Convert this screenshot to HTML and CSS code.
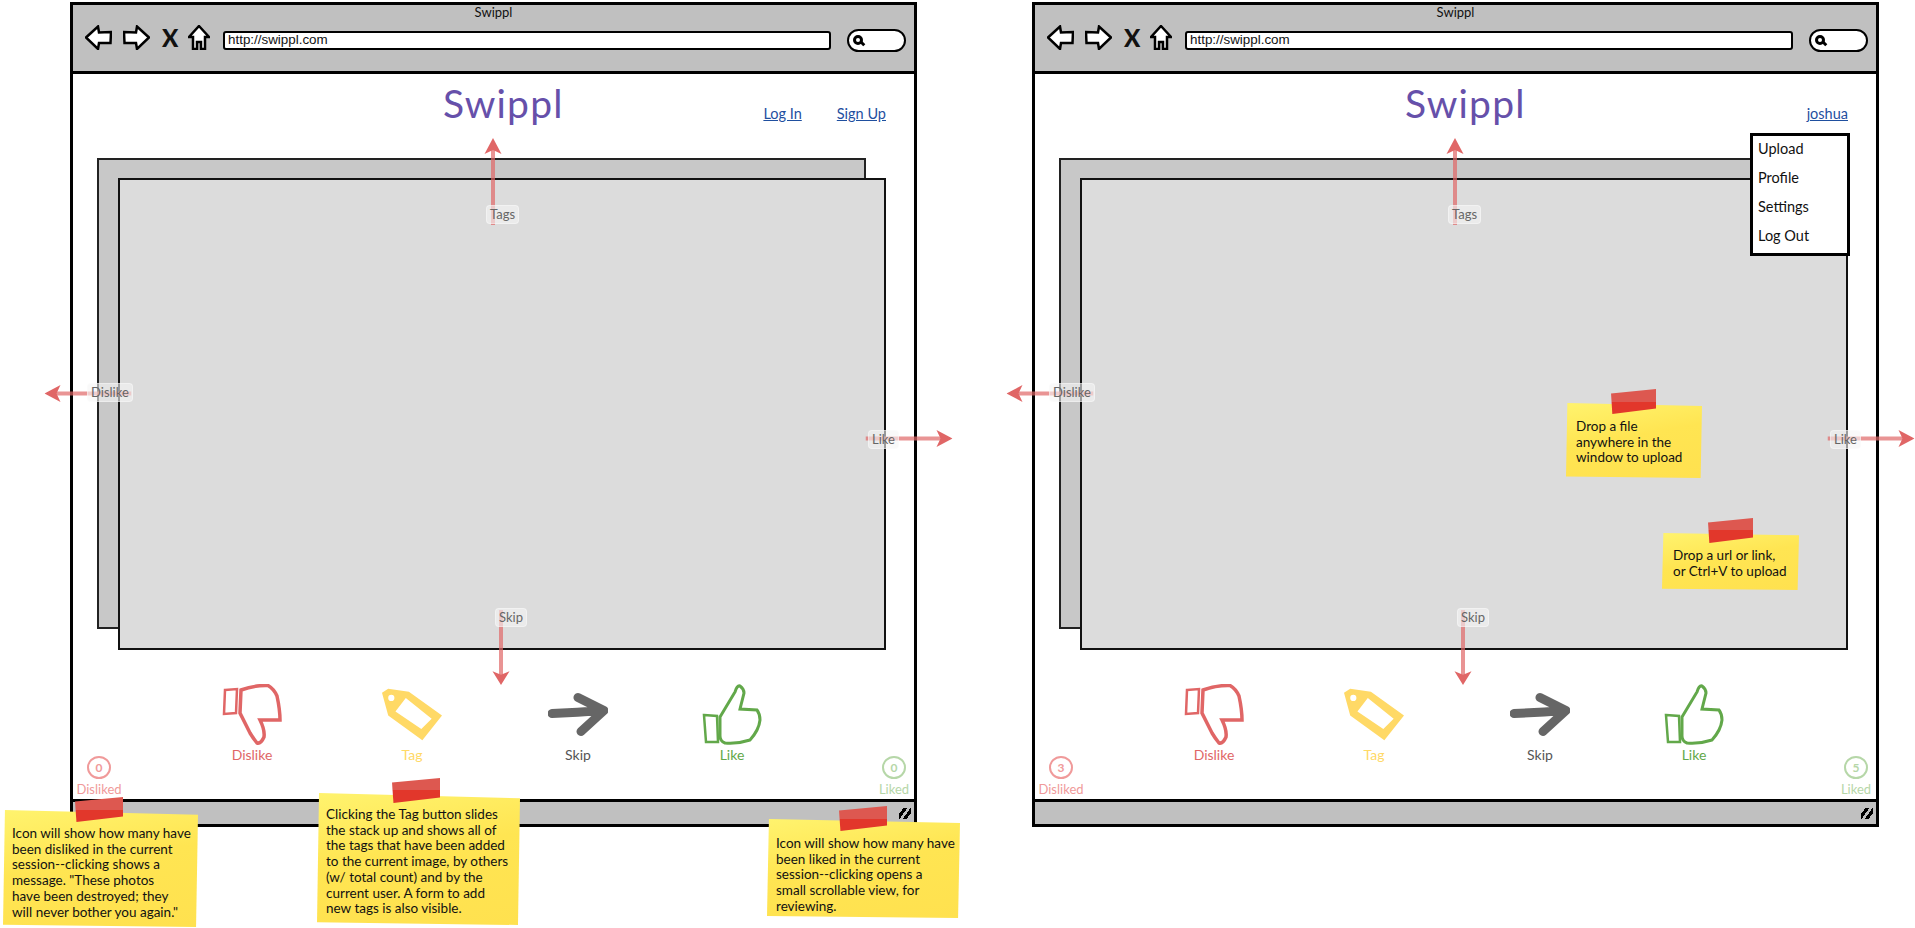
FILE: index.html
```html
<!DOCTYPE html>
<html lang="en">
<head>
  <meta charset="UTF-8" />
  <title>Swippl wireframes</title>
  <link rel="stylesheet" href="styles.css">
</head>
<body>

  <svg class="sprites" width="0" height="0">
    <symbol id="i-back" viewBox="0 0 27 25"><path d="M1 12.5 13 1.5 14 7.5 26 7 25.500 18 14 18 13 24Z"/></symbol>
    <symbol id="i-forward" viewBox="0 0 27 25"><path d="M26 12.500 14 1.500 13 7.500 1 7 1.500 18 13 18 14 24Z"/></symbol>
    <symbol id="i-home" viewBox="0 0 22 25"><path d="M11 1 21 12 17 12 17 24 13 24 13 17 9 17 9 24 5 24 5 12 1 12Z"/></symbol>
    <symbol id="i-dislike" viewBox="0 0 58 61">
      <path d="M2 6 14 5 13 29 1 30Z" stroke-width="2.500"/>
      <path d="M18 6Q32 1 45 1.500 51 5 54 12 57 26 57 36L37 36Q42 46 41 53 38 60 34 59 30 54 27 49L17 29Z" stroke-width="3.500"/>
    </symbol>
    <symbol id="i-tag" viewBox="0 0 58 50">
      <path fill-rule="evenodd" d="M0 4 6 0 26 3 58 26 39 50 6 26ZM9 6A3 3 0 1 0 9 12 3 3 0 1 0 9 6ZM23 9 13 22 38 39 48 29 23 9Z"/>
    </symbol>
    <symbol id="i-skip" viewBox="0 0 60 44"><path d="M4 21Q30 20 54 18M30 5 56 18 33 39"/></symbol>
    <symbol id="i-like" viewBox="0 0 58 61">
      <path d="M1 31 14 32 15 58 3 58Z" stroke-width="2.500"/>
      <path d="M17 33 32 8Q34 1 37 2 41 5 41 9L37 25 54 26Q57 30 57 36 56 46 47 56 35 60 22 59 17 57 17 52Z" stroke-width="3"/>
    </symbol>
    <symbol id="i-arrow" viewBox="0 0 20 87" preserveAspectRatio="none"><path class="shaft" d="M10 10V87"/><path class="head" d="M10 0 18.500 16 10 12 1.500 16Z"/></symbol>
  </svg>

  <main class="board">

    <section class="window">
      <header class="toolbar">
        <div class="toolbar-title">Swippl</div>
        <div class="toolbar-row">
          <svg class="nav nav-arrow"><use href="#i-back"/></svg>
          <svg class="nav nav-arrow"><use href="#i-forward"/></svg>
          <span class="nav-stop">X</span>
          <svg class="nav nav-home"><use href="#i-home"/></svg>
          <div class="url-bar">http://swippl.com</div>
          <div class="search-box"><span class="search-glass"></span></div>
        </div>
      </header>

      <div class="site-header">
        <div class="logo">Swippl</div>
        <nav class="site-links">
          <a href="#">Log In</a>
          <a href="#">Sign Up</a>
        </nav>
      </div>

      <div class="stage">
        <div class="card-back"></div>
        <div class="card-front"></div>
      </div>

      <div class="footer">
        <div class="counter counter-bad"><span class="ring">0</span><span>Disliked</span></div>
        <div class="actions">
          <div class="action action-dislike"><svg class="icon"><use href="#i-dislike"/></svg><span>Dislike</span></div>
          <div class="action action-tag"><svg class="icon"><use href="#i-tag"/></svg><span>Tag</span></div>
          <div class="action action-skip"><svg class="icon"><use href="#i-skip"/></svg><span>Skip</span></div>
          <div class="action action-like"><svg class="icon"><use href="#i-like"/></svg><span>Like</span></div>
        </div>
        <div class="counter counter-good"><span class="ring">0</span><span>Liked</span></div>
      </div>

      <div class="status-bar"><span class="grip"></span></div>

      <div class="swipe swipe-up"><svg class="arrow"><use href="#i-arrow"/></svg><span class="swipe-label">Tags</span></div>
      <div class="swipe swipe-down"><svg class="arrow"><use href="#i-arrow"/></svg><span class="swipe-label">Skip</span></div>
      <div class="swipe swipe-left"><svg class="arrow"><use href="#i-arrow"/></svg><span class="swipe-label">Dislike</span></div>
      <div class="swipe swipe-right"><svg class="arrow"><use href="#i-arrow"/></svg><span class="swipe-label">Like</span></div>

      <div class="note note-disliked">Icon will show how many have<br>been disliked in the current<br>session--clicking shows a<br>message. "These photos<br>have been destroyed; they<br>will never bother you again."</div>
      <div class="note note-tag">Clicking the Tag button slides<br>the stack up and shows all of<br>the tags that have been added<br>to the current image, by others<br>(w/ total count) and by the<br>current user. A form to add<br>new tags is also visible.</div>
      <div class="note note-liked">Icon will show how many have<br>been liked in the current<br>session--clicking opens a<br>small scrollable view, for<br>reviewing.</div>
    </section>

    <section class="window">
      <header class="toolbar">
        <div class="toolbar-title">Swippl</div>
        <div class="toolbar-row">
          <svg class="nav nav-arrow"><use href="#i-back"/></svg>
          <svg class="nav nav-arrow"><use href="#i-forward"/></svg>
          <span class="nav-stop">X</span>
          <svg class="nav nav-home"><use href="#i-home"/></svg>
          <div class="url-bar">http://swippl.com</div>
          <div class="search-box"><span class="search-glass"></span></div>
        </div>
      </header>

      <div class="site-header">
        <div class="logo">Swippl</div>
        <nav class="site-links">
          <a href="#">joshua</a>
        </nav>
      </div>

      <div class="stage">
        <div class="card-back"></div>
        <div class="card-front"></div>
      </div>

      <div class="footer">
        <div class="counter counter-bad"><span class="ring">3</span><span>Disliked</span></div>
        <div class="actions">
          <div class="action action-dislike"><svg class="icon"><use href="#i-dislike"/></svg><span>Dislike</span></div>
          <div class="action action-tag"><svg class="icon"><use href="#i-tag"/></svg><span>Tag</span></div>
          <div class="action action-skip"><svg class="icon"><use href="#i-skip"/></svg><span>Skip</span></div>
          <div class="action action-like"><svg class="icon"><use href="#i-like"/></svg><span>Like</span></div>
        </div>
        <div class="counter counter-good"><span class="ring">5</span><span>Liked</span></div>
      </div>

      <div class="status-bar"><span class="grip"></span></div>

      <div class="swipe swipe-up"><svg class="arrow"><use href="#i-arrow"/></svg><span class="swipe-label">Tags</span></div>
      <div class="swipe swipe-down"><svg class="arrow"><use href="#i-arrow"/></svg><span class="swipe-label">Skip</span></div>
      <div class="swipe swipe-left"><svg class="arrow"><use href="#i-arrow"/></svg><span class="swipe-label">Dislike</span></div>
      <div class="swipe swipe-right"><svg class="arrow"><use href="#i-arrow"/></svg><span class="swipe-label">Like</span></div>

      <ul class="user-menu">
        <li>Upload</li>
        <li>Profile</li>
        <li>Settings</li>
        <li>Log Out</li>
      </ul>

      <div class="note note-file">Drop a file<br>anywhere in the<br>window to upload</div>
      <div class="note note-url">Drop a url or link,<br>or Ctrl+V to upload</div>
    </section>

  </main>

</body>
</html>
```

FILE: styles.css
```css
html, body {
  height: 100%;
}

body {
  margin: 0;
  overflow: hidden;
  background: #fff;
  font-family: Lato, sans-serif;
  color: #111;
}

.sprites {
  position: absolute;
}

.board {
  display: flex;
  gap: 115px;
  padding: 2px 0 0 70px;
}

.window {
  position: relative;
  display: flex;
  flex-direction: column;
  box-sizing: border-box;
  width: 847px;
  height: 825px;
  border: 3px solid #000;
}

/* browser chrome */
.toolbar {
  box-sizing: border-box;
  height: 69px;
  background: #c0c0c0;
  border-bottom: 3px solid #000;
}

.toolbar-title {
  height: 14px;
  font-size: 13px;
  line-height: 14px;
  text-align: center;
}

.toolbar-row {
  display: flex;
  align-items: center;
  height: 26px;
  margin-top: 5px;
  padding: 0 8px 0 12px;
}

.nav {
  fill: #fff;
  stroke: #000;
  stroke-width: 2.500;
  overflow: visible;
}

.nav-arrow {
  width: 27px;
  height: 25px;
  margin-right: 11px;
}

.nav-home {
  width: 22px;
  height: 25px;
  margin-right: 13px;
}

.nav-stop {
  width: 15px;
  margin: 0 11px 0 1px;
  font-size: 24px;
  font-weight: 900;
  line-height: 25px;
  text-align: center;
}

.url-bar {
  flex: 1;
  box-sizing: border-box;
  height: 19px;
  margin-top: 7px;
  padding-left: 3px;
  background: #fff;
  border: 2.500px solid #000;
  border-radius: 3px;
  font-family: "Liberation Sans", sans-serif;
  font-size: 13.400px;
  line-height: 14px;
}

.search-box {
  box-sizing: border-box;
  width: 59px;
  height: 23px;
  margin: 7px 0 0 16px;
  padding: 4px 0 0 4px;
  background: #fff;
  border: 2.500px solid #000;
  border-radius: 12px;
}

.search-glass {
  position: relative;
  display: block;
  box-sizing: border-box;
  width: 10px;
  height: 10px;
  border: 3px solid #000;
  border-radius: 50%;
}

.search-glass::after {
  content: "";
  position: absolute;
  top: 4px;
  left: 4px;
  width: 5px;
  height: 3px;
  background: #000;
  transform: rotate(45deg);
}

/* site header */
.site-header {
  display: flex;
  box-sizing: border-box;
  height: 84px;
  padding: 4px 28px 0 370px;
}

.logo {
  font-size: 39px;
  line-height: 50px;
  letter-spacing: 1.200px;
  color: #6650aa;
}

.site-links {
  display: flex;
  gap: 35px;
  margin: 27px 0 0 auto;
  font-size: 14.500px;
}

.site-links a {
  color: #1f4f9f;
}

/* photo stack */
.stage {
  position: relative;
  box-sizing: border-box;
  width: 789px;
  height: 492px;
  margin-left: 24px;
  padding: 20px 0 0 21px;
}

.card-back {
  position: absolute;
  top: 0;
  left: 0;
  box-sizing: border-box;
  width: 769px;
  height: 471px;
  background: #c8c8c8;
  border: 2.500px solid #222;
}

.card-front {
  position: relative;
  box-sizing: border-box;
  height: 472px;
  background: #dcdcdc;
  border: 2.500px solid #111;
}

/* buttons under the stack */
.footer {
  flex: 1;
  display: grid;
  grid-template-columns: 52px 1fr 40px;
}

.actions {
  display: flex;
  padding: 34px 0 0 77px;
}

.action {
  display: flex;
  flex-direction: column;
  align-items: center;
  width: 100px;
  height: 80px;
  font-size: 14px;
}

.icon {
  width: 60px;
  height: 61px;
  margin-bottom: 1px;
  overflow: visible;
}

.action-dislike {
  color: #e06666;
  fill: none;
  stroke: #e06666;
}

.action-tag {
  margin-left: 60px;
  color: #ffd966;
  fill: #ffd966;
}

.action-skip {
  margin-left: 66px;
  color: #555;
  fill: none;
  stroke: #666;
  stroke-width: 9;
  stroke-linecap: round;
  stroke-linejoin: round;
}

.action-like {
  margin-left: 54px;
  color: #62a84a;
  fill: none;
  stroke: #62a84a;
}

.counter {
  align-self: end;
  display: flex;
  flex-direction: column;
  align-items: center;
  gap: 2px;
  padding-bottom: 2px;
  font-size: 13px;
  white-space: nowrap;
}

.counter-bad {
  color: #f09a9a;
}

.counter-good {
  color: #b6d7a8;
}

.ring {
  box-sizing: border-box;
  display: flex;
  align-items: center;
  justify-content: center;
  width: 24px;
  height: 23px;
  border: 2px solid currentColor;
  border-radius: 50%;
  font-size: 12px;
  font-weight: 700;
}

.status-bar {
  position: relative;
  box-sizing: border-box;
  height: 25px;
  background: #c0c0c0;
  border-top: 3px solid #000;
}

.grip {
  position: absolute;
  top: 6px;
  right: 3px;
  width: 12px;
  height: 11px;
  background: linear-gradient(125deg, transparent 22%, #000 22%, #000 42%, transparent 42%, transparent 58%, #000 58%, #000 78%, transparent 78%);
}

/* swipe hints */
.swipe {
  position: absolute;
  z-index: 1;
}

.arrow {
  display: block;
  width: 20px;
  height: 87px;
  overflow: visible;
}

.shaft {
  fill: none;
  stroke: #e06666;
  stroke-width: 4;
  opacity: 0.7;
}

.head {
  fill: #e06666;
}

.swipe-label {
  position: absolute;
  box-sizing: border-box;
  height: 19px;
  padding: 0 3px;
  background: rgba(245, 245, 245, 0.6);
  border: 1px solid rgba(255, 255, 255, 0.35);
  border-radius: 4px;
  font-size: 13px;
  line-height: 17px;
  text-align: center;
  color: #666;
}

.swipe-up {
  top: 133px;
  left: 410px;
  width: 20px;
  height: 87px;
}

.swipe-up .swipe-label {
  top: 67px;
  left: 3px;
}

.swipe-down {
  top: 605px;
  left: 418px;
  width: 20px;
  height: 75px;
}

.swipe-down .arrow {
  height: 75px;
  transform: scaleY(-1);
}

.swipe-down .swipe-label {
  top: -2px;
  left: 4px;
}

.swipe-left {
  top: 378px;
  left: -28px;
  width: 87px;
  height: 20px;
}

.swipe-left .arrow {
  transform: translate(33px, -33px) rotate(-90deg);
}

.swipe-left .swipe-label {
  top: 0;
  left: 42px;
}

.swipe-right {
  top: 423px;
  left: 793px;
  width: 87px;
  height: 20px;
}

.swipe-right .arrow {
  transform: translate(33px, -33px) rotate(90deg);
}

.swipe-right .swipe-label {
  top: 2px;
  left: 2px;
}

/* user dropdown */
.user-menu {
  position: absolute;
  z-index: 2;
  top: 128px;
  left: 715px;
  box-sizing: border-box;
  width: 100px;
  height: 123px;
  margin: 0;
  padding: 0 0 0 5px;
  list-style: none;
  background: #fff;
  border: 3px solid #000;
  font-size: 14.500px;
  line-height: 29px;
}

.user-menu li:first-child {
  margin-top: -2px;
}

/* sticky notes */
.note {
  position: absolute;
  z-index: 3;
  isolation: isolate;
  box-sizing: border-box;
  font-size: 13.500px;
  line-height: 15.700px;
  white-space: nowrap;
  color: #111;
}

.note::before {
  content: "";
  position: absolute;
  z-index: -1;
  inset: 0;
  background: linear-gradient(170deg, #fff36e 0%, #ffe552 45%, #ffe14f 100%);
  clip-path: polygon(1% 0, 100% 4%, 99% 100%, 0 98%);
}

.note::after {
  content: "";
  position: absolute;
  width: 48px;
  height: 25px;
  background: linear-gradient(#dd5850 50%, #e2372b 50%);
  clip-path: polygon(0 18%, 100% 0, 100% 78%, 3% 100%);
}

.note-disliked {
  top: 805px;
  left: -70px;
  width: 195px;
  height: 117px;
  padding: 16px 0 0 9px;
}

.note-disliked::after {
  top: -13px;
  left: 72px;
}

.note-tag {
  top: 788px;
  left: 244px;
  width: 203px;
  height: 132px;
  padding: 14px 0 0 9px;
}

.note-tag::after {
  top: -15px;
  left: 75px;
}

.note-liked {
  top: 814px;
  left: 694px;
  width: 193px;
  height: 99px;
  padding: 17px 0 0 9px;
}

.note-liked::after {
  top: -13px;
  left: 72px;
}

.note-file {
  top: 398px;
  left: 531px;
  width: 136px;
  height: 75px;
  padding: 16px 0 0 10px;
}

.note-file::after {
  top: -14px;
  left: 45px;
  width: 45px;
}

.note-url {
  top: 528px;
  left: 627px;
  width: 137px;
  height: 57px;
  padding: 15px 0 0 11px;
}

.note-url::after {
  top: -15px;
  left: 46px;
  width: 45px;
}
```
